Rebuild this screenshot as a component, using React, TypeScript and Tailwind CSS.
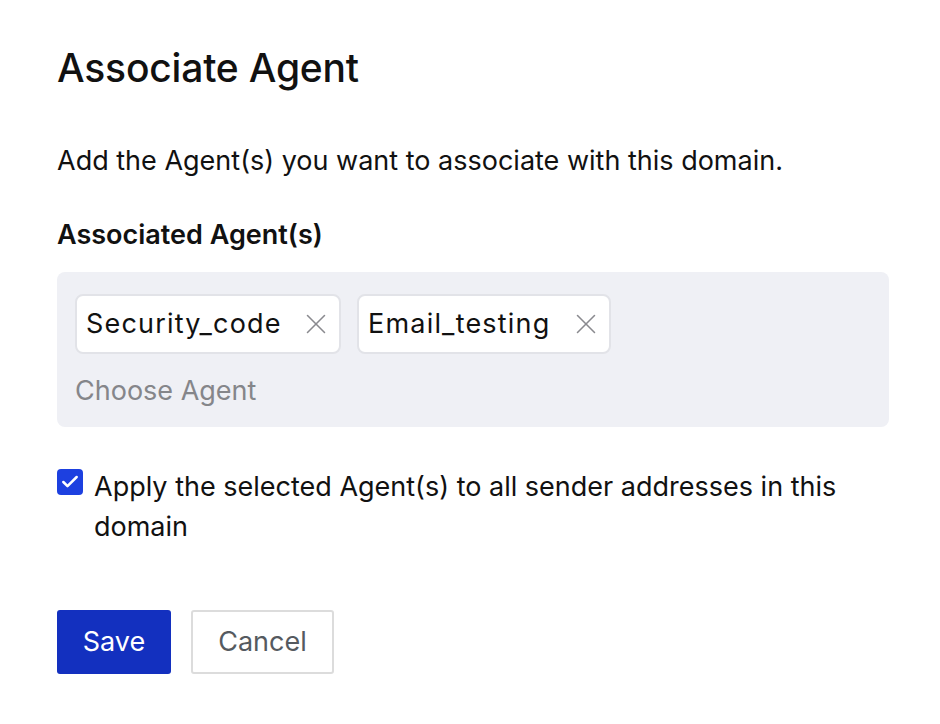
import { Check, X } from "lucide-react";

function Chip({ label, width }: { label: string; width: string }) {
  return (
    <div
      className={`flex h-[60px] items-center justify-between rounded-lg border-2 border-[#e2e3e8] bg-white pl-[9px] pr-[6px] ${width}`}
    >
      <span className="tracking-[1.2px]">{label}</span>
      <X size={34} strokeWidth={1.1} className="text-[#8a8a8f]" />
    </div>
  );
}

export default function App() {
  return (
    <div
      className="min-h-screen bg-white px-[57px] pt-[44px] text-[27px] leading-[38px] text-[#111]"
      style={{ fontFamily: "Inter, 'Liberation Sans', sans-serif" }}
    >
      <h1 className="text-[39px] font-medium leading-[48px] tracking-[-0.2px]">Associate Agent</h1>

      <p className="mt-[50px]">Add the Agent(s) you want to associate with this domain.</p>

      <div className="mt-[36px] font-semibold">Associated Agent(s)</div>

      <div className="mt-[18px] w-[832px] rounded-lg bg-[#eff0f5] px-[18px] pb-[17px] pt-[22px]">
        <div className="flex gap-[16px]">
          <Chip label="Security_code" width="w-[266px]" />
          <Chip label="Email_testing" width="w-[254px]" />
        </div>
        <div className="mt-[18px] text-[#85868a]">Choose Agent</div>
      </div>

      <label className="mt-[40px] flex gap-[11px] leading-[40px]">
        <span className="mt-[2px] flex h-[26px] w-[26px] shrink-0 items-center justify-center rounded-[4px] bg-[#1d40e0]">
          <Check size={20} strokeWidth={3} className="text-white" />
        </span>
        <span>Apply the selected Agent(s) to all sender addresses in this domain</span>
      </label>

      <div className="mt-[63px] flex gap-[20px]">
        <button className="h-[64px] w-[114px] rounded-[3px] bg-[#1330bf] text-white">Save</button>
        <button className="h-[64px] w-[143px] rounded-[3px] border-2 border-[#dcdcdc] bg-white text-[#555a60]">
          Cancel
        </button>
      </div>
    </div>
  );
}
